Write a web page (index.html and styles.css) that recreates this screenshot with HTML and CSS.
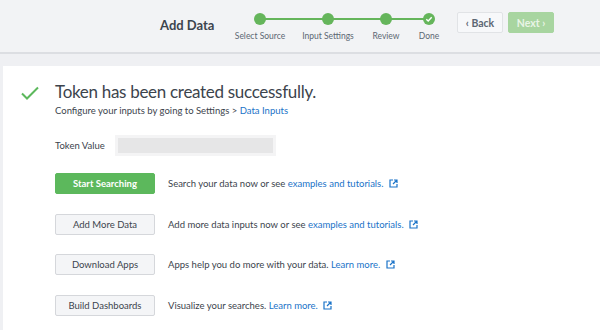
FILE: index.html
```html
<!DOCTYPE html>
<html lang="en">
<head>
    <meta charset="UTF-8">
    <title>Add Data</title>
    <link rel="stylesheet" href="styles.css">
</head>
<body>

    <div class="header">
        <div class="page-title">Add Data</div>

        <div class="steps">
            <div class="step">
                <span class="dot"></span>
                <span class="step-label">Select Source</span>
            </div>
            <div class="step">
                <span class="dot"></span>
                <span class="step-label">Input Settings</span>
            </div>
            <div class="step">
                <span class="dot"></span>
                <span class="step-label">Review</span>
            </div>
            <div class="step">
                <span class="dot done">
                    <svg width="8" height="8" viewBox="0 0 8 8"><path d="M1.3 4.2 L3.2 6 L6.7 2.2" fill="none" stroke="#fff" stroke-width="1.4"/></svg>
                </span>
                <span class="step-label">Done</span>
            </div>
        </div>

        <div class="nav-buttons">
            <button class="btn-back">&lsaquo; Back</button>
            <button class="btn-next">Next &rsaquo;</button>
        </div>
    </div>

    <div class="panel">
        <div class="success">
            <svg class="check" width="20" height="16" viewBox="0 0 20 16"><path d="M2 8.5 L7 13.5 L18 2.5" fill="none" stroke="#5cb85c" stroke-width="2"/></svg>
            <div>
                <h1>Token has been created successfully.</h1>
                <p class="sub">Configure your inputs by going to Settings &gt; <a href="#">Data Inputs</a></p>
            </div>
        </div>

        <div class="token-row">
            <label>Token Value</label>
            <div class="token-box"></div>
        </div>

        <div class="action">
            <button class="btn primary">Start Searching</button>
            <span>Search your data now or see <a href="#">examples and tutorials.</a> <svg class="ext" width="9" height="9" viewBox="0 0 9 9"><path d="M4 1H1v7h7V5" fill="none" stroke="#1a73c8" stroke-width="1.2"/><path d="M5 1h3v3M8 1L4 5" fill="none" stroke="#1a73c8" stroke-width="1.2"/></svg></span>
        </div>
        <div class="action">
            <button class="btn">Add More Data</button>
            <span>Add more data inputs now or see <a href="#">examples and tutorials.</a> <svg class="ext" width="9" height="9" viewBox="0 0 9 9"><path d="M4 1H1v7h7V5" fill="none" stroke="#1a73c8" stroke-width="1.2"/><path d="M5 1h3v3M8 1L4 5" fill="none" stroke="#1a73c8" stroke-width="1.2"/></svg></span>
        </div>
        <div class="action">
            <button class="btn">Download Apps</button>
            <span>Apps help you do more with your data. <a href="#">Learn more.</a> <svg class="ext" width="9" height="9" viewBox="0 0 9 9"><path d="M4 1H1v7h7V5" fill="none" stroke="#1a73c8" stroke-width="1.2"/><path d="M5 1h3v3M8 1L4 5" fill="none" stroke="#1a73c8" stroke-width="1.2"/></svg></span>
        </div>
        <div class="action">
            <button class="btn">Build Dashboards</button>
            <span>Visualize your searches. <a href="#">Learn more.</a> <svg class="ext" width="9" height="9" viewBox="0 0 9 9"><path d="M4 1H1v7h7V5" fill="none" stroke="#1a73c8" stroke-width="1.2"/><path d="M5 1h3v3M8 1L4 5" fill="none" stroke="#1a73c8" stroke-width="1.2"/></svg></span>
        </div>
    </div>

</body>
</html>
```

FILE: styles.css
```css
body {
    font-family: 'Lato', 'Open Sans', sans-serif;
    margin: 0;
    padding: 0;
    background-color: #eff0f3;
    color: #3c444d;
    overflow: hidden;
}

.header {
    height: 54px;
    background-color: #f2f3f5;
    border-bottom: 2px solid #dcdee2;
    display: flex;
    align-items: flex-start;
    box-sizing: border-box;
}

.page-title {
    margin: 17px 0 0 160px;
    font-size: 13px;
    font-weight: 700;
    color: #3c444d;
    width: 72px;
}

.steps {
    display: flex;
    margin-top: 13px;
}

.step {
    position: relative;
    display: flex;
    flex-direction: column;
    align-items: center;
}

.step:nth-child(1) { width: 56px; margin-right: 6px; }
.step:nth-child(2) { width: 68px; }
.step:nth-child(3) { width: 48px; }
.step:nth-child(4) { width: 38px; }

/* connecting line between dots */
.step + .step::before {
    content: "";
    position: absolute;
    top: 5px;
    right: 50%;
    height: 2px;
    background-color: #65b55b;
}
.step:nth-child(2)::before { width: 68px; }
.step:nth-child(3)::before { width: 58px; }
.step:nth-child(4)::before { width: 43px; }

.dot {
    position: relative;
    z-index: 1;
    width: 12px;
    height: 12px;
    border-radius: 50%;
    background-color: #65b55b;
    display: flex;
    align-items: center;
    justify-content: center;
}

.step-label {
    margin-top: 6px;
    font-size: 8.5px;
    color: #5c6773;
    white-space: nowrap;
}

.nav-buttons {
    display: flex;
    gap: 5px;
    margin: 12px 0 0 9px;
}

.nav-buttons button {
    height: 21px;
    width: 46px;
    font-family: inherit;
    font-size: 10.5px;
    font-weight: 700;
    border-radius: 2px;
    padding: 0;
}

.btn-back {
    background-color: #f7f8fa;
    border: 1px solid #e1e3e6;
    color: #5c6773;
}

.btn-next {
    background-color: #a8d5a0;
    border: 1px solid #a8d5a0;
    color: #e8f4e6;
}

.panel {
    background-color: #ffffff;
    margin: 12px 0 0 3px;
    padding: 14px 0 0 0;
    height: 264px;
    box-sizing: border-box;
}

.success {
    display: flex;
    align-items: flex-start;
}

.check {
    margin: 5px 0 0 17px;
}

.success > div {
    margin-left: 15px;
}

h1 {
    margin: 0;
    font-size: 17px;
    letter-spacing: -0.3px;
    font-weight: 400;
    color: #3c444d;
    line-height: 24px;
}

.sub {
    margin: 1px 0 0 0;
    font-size: 9.5px;
    color: #3c444d;
}

a {
    color: #1a73c8;
    text-decoration: none;
}

.token-row {
    display: flex;
    align-items: center;
    margin: 19px 0 0 52px;
}

.token-row label {
    font-size: 9.5px;
    width: 60px;
}

.token-box {
    width: 155px;
    height: 15px;
    border: 3px solid #f4f4f5;
    background-color: #e6e6e7;
}

.action {
    display: flex;
    align-items: center;
    margin: 17px 0 0 52px;
    font-size: 9.5px;
}

.action + .action {
    margin-top: 19.5px;
}

.btn {
    width: 100px;
    height: 21px;
    margin-right: 13px;
    font-family: inherit;
    font-size: 9.5px;
    background-color: #f4f5f7;
    border: 1px solid #d5d7db;
    border-radius: 2px;
    color: #3c444d;
    padding: 0;
}

.btn.primary {
    background-color: #5cb85c;
    border-color: #5cb85c;
    color: #ffffff;
    font-weight: 700;
}

.ext {
    margin-left: 3px;
    vertical-align: -1px;
}
```
